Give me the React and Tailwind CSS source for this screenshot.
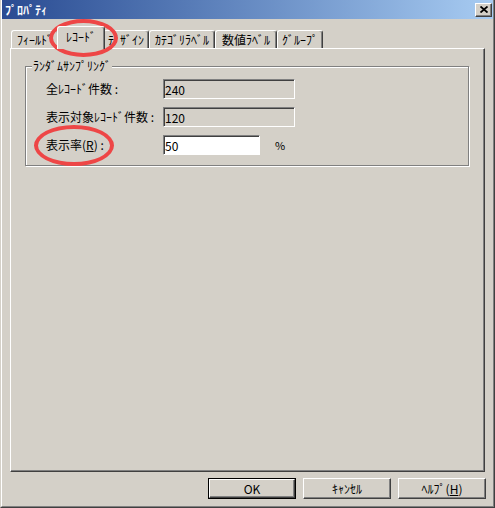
import React from "react";

const tabs = [
  { label: "ﾌｨｰﾙﾄﾞ", width: "w-[48px]" },
  { label: "ﾚｺｰﾄﾞ", width: "w-[48px]", active: true },
  { label: "ﾃﾞｻﾞｲﾝ", width: "w-[46px]" },
  { label: "ｶﾃｺﾞﾘﾗﾍﾞﾙ", width: "w-[66px]" },
  { label: "数値ﾗﾍﾞﾙ", width: "w-[62px]" },
  { label: "ｸﾞﾙｰﾌﾟ", width: "w-[46px]" },
];

const raised =
  "border border-t-white border-l-white border-r-[#404040] border-b-[#404040] shadow-[inset_-1px_-1px_0_#808080]";

const sunken =
  "border border-t-[#808080] border-l-[#808080] border-b-white border-r-white shadow-[inset_1px_1px_0_#404040]";

const Tab = ({ label, width, active }) => (
  <div
    className={`${width} flex justify-center rounded-t-[3px] border-t border-l border-r border-t-white border-l-white border-r-[#404040] bg-[#d4d0c8] shadow-[inset_-1px_0_0_#808080] ${
      active
        ? "relative z-10 -mx-[2px] -mb-[1px] h-[23px] items-start pt-[4px]"
        : "h-[18px] items-center pt-[1px]"
    }`}
  >
    <span className="leading-none">{label}</span>
  </div>
);

const Field = ({ label, value, width, editable, suffix }) => (
  <div className="flex h-[20px] items-center">
    <span className="w-[117px] leading-none">{label}</span>
    <input
      readOnly
      value={value}
      className={`${width} h-[20px] ${sunken} ${
        editable ? "bg-white" : "bg-[#d4d0c8]"
      } px-[1px] text-[12px] leading-none text-black outline-none`}
    />
    {suffix && <span className="ml-[15px] text-[11px] leading-none">{suffix}</span>}
  </div>
);

const Button = ({ children, primary }) =>
  primary ? (
    <div className="h-[21px] w-[88px] border border-black">
      <div className={`flex h-full w-full items-center justify-center ${raised}`}>
        {children}
      </div>
    </div>
  ) : (
    <div className={`flex h-[21px] w-[88px] items-center justify-center ${raised}`}>
      {children}
    </div>
  );

export default function App() {
  return (
    <div className="relative h-[508px] w-[495px] overflow-hidden border-r border-b border-l border-r-[#404040] border-b-[#404040] border-l-[#d4d0c8] bg-[#d4d0c8] font-['Noto_Sans_CJK_JP','Noto_Sans',sans-serif] text-[12px] text-black">
      <div className="flex h-full flex-col border-r border-b border-l border-r-[#808080] border-b-[#808080] border-l-white">
        {/* タイトルバー */}
        <div className="flex h-[19px] shrink-0 items-center justify-between bg-linear-to-r from-[#2a4b92] to-[#a8ccf2] pr-[1px] pl-[3px]">
          <span className="font-bold leading-none text-white">ﾌﾟﾛﾊﾟﾃｨ</span>
          <div className={`flex h-[14px] w-[17px] items-center justify-center bg-[#d4d0c8] ${raised}`}>
            <svg width="8" height="7" viewBox="0 0 8 7">
              <path d="M0.5 0.5 L7.5 6.5 M7.5 0.5 L0.5 6.5" stroke="#000" strokeWidth="1.8" />
            </svg>
          </div>
        </div>

        {/* タブ */}
        <div className="mt-[7px] ml-[9px] flex h-[22px] shrink-0 items-end">
          {tabs.map((t) => (
            <Tab key={t.label} {...t} />
          ))}
        </div>

        {/* パネル */}
        <div className={`mx-[8px] h-[424px] shrink-0 ${raised}`}>
          <div className="relative mt-[17px] mr-[15px] ml-[14px] h-[100px] border border-[#808080] shadow-[1px_1px_0_#fff,inset_1px_1px_0_#fff]">
            <span className="absolute -top-[7px] left-[6px] bg-[#d4d0c8] px-[1px] leading-none">
              ﾗﾝﾀﾞﾑｻﾝﾌﾟﾘﾝｸﾞ
            </span>
            <div className="flex flex-col gap-[8px] pt-[12px] pl-[20px]">
              <Field label="全ﾚｺｰﾄﾞ件数 :" value="240" width="w-[132px]" />
              <Field label="表示対象ﾚｺｰﾄﾞ件数 :" value="120" width="w-[132px]" />
              <Field
                label={
                  <>
                    表示率(<span className="underline">R</span>) :
                  </>
                }
                value="50"
                width="w-[97px]"
                editable
                suffix="%"
              />
            </div>
          </div>
        </div>

        {/* ボタン */}
        <div className="mt-[6px] flex justify-end gap-[7px] pr-[7px]">
          <Button primary>OK</Button>
          <Button>ｷｬﾝｾﾙ</Button>
          <Button>
            ﾍﾙﾌﾟ(<span className="underline">H</span>)
          </Button>
        </div>
      </div>

      {/* 赤丸の注釈 */}
      <div className="pointer-events-none absolute top-[19px] left-[48px] h-[38px] w-[69px] rounded-[50%] border-[4px] border-[#ee4646]" />
      <div className="pointer-events-none absolute top-[125px] left-[33px] h-[41px] w-[80px] rounded-[50%] border-[4px] border-[#ee4646]" />
    </div>
  );
}
